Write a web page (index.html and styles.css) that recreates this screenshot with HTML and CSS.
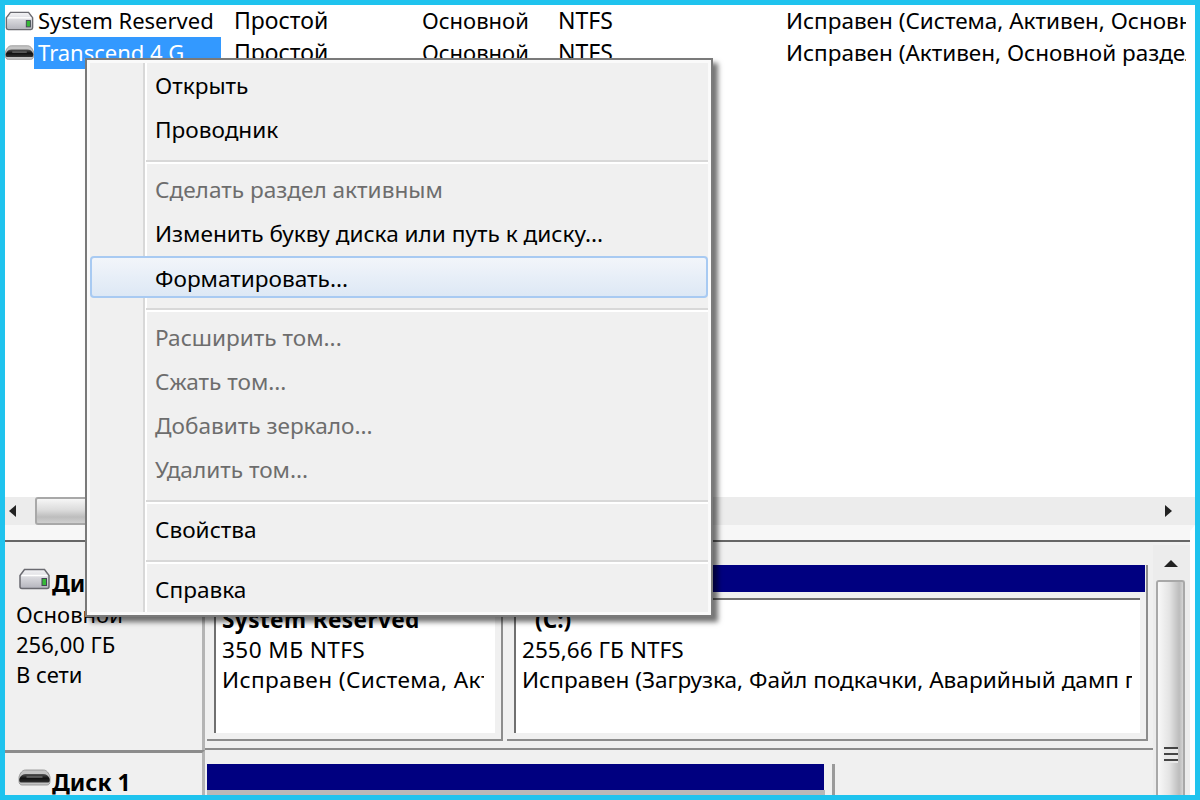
FILE: index.html
```html
<!DOCTYPE html>
<html lang="ru">
<head>
<meta charset="utf-8">
<title>Управление дисками</title>
<link rel="stylesheet" href="styles.css">
</head>
<body>
<svg class="defs" width="0" height="0" aria-hidden="true">
  <defs>
    <linearGradient id="g-body" x1="0" y1="0" x2="0" y2="1"><stop offset="0" stop-color="#f4f4f6"/><stop offset="1" stop-color="#b4b4bc"/></linearGradient>
    <linearGradient id="g-slot" x1="0" y1="0" x2="0" y2="1"><stop offset="0" stop-color="#555"/><stop offset=".5" stop-color="#111"/><stop offset="1" stop-color="#333"/></linearGradient>
    <symbol id="drive" viewBox="0 0 32 22">
      <path d="M6 1.500h20l4.500 6v11a2 2 0 0 1-2 2h-25a2 2 0 0 1-2-2v-11z" fill="url(#g-body)" stroke="#6a6a70" stroke-width="1.500"/>
      <path d="M3 7.500h26" stroke="#ffffff" stroke-width="1.500"/>
      <rect x="23.500" y="10.500" width="4.500" height="7" fill="#35b836" stroke="#445" stroke-width="1"/>
    </symbol>
    <symbol id="usb" viewBox="0 0 32 18">
      <path d="M7 1h18c3 0 5.500 3 6.500 7v4c0 2.500-1 4-3 4H3.500c-2 0-3-1.500-3-4V8C1.500 4 4 1 7 1z" fill="#c4c4c4" stroke="#8a8a8a" stroke-width=".8"/>
      <path d="M.800 10c1.200-3.500 3.500-5 6.500-5h17.400c3 0 5.300 1.500 6.500 5v1.500c0 1.500-1 2-2 2H2.800c-1 0-2-.5-2-2z" fill="url(#g-slot)"/>
      <path d="M8 8h16" stroke="#8a8a8a" stroke-width="1"/>
    </symbol>
  </defs>
</svg>
<div class="frame">
  <section class="list">
    <div class="row">
      <svg class="row-icon"><use href="#drive"/></svg>
      <span class="c-name">System Reserved</span>
      <span class="c-layout">Простой</span>
      <span class="c-type">Основной</span>
      <span class="c-fs">NTFS</span>
      <span class="c-status">Исправен (Система, Активен, Основной раздел)</span>
    </div>
    <div class="row">
      <svg class="row-icon"><use href="#usb"/></svg>
      <span class="c-name is-selected">Transcend 4 G</span>
      <span class="c-layout">Простой</span>
      <span class="c-type">Основной</span>
      <span class="c-fs">NTFS</span>
      <span class="c-status">Исправен (Активен, Основной раздел)</span>
    </div>
  </section>

  <div class="hscroll">
    <svg class="arrow" viewBox="0 0 10 14"><path d="M8 1v12L1 7z" fill="#222"/></svg>
    <div class="hthumb"></div>
    <svg class="arrow arrow-right" viewBox="0 0 10 14"><path d="M2 1v12l7-6z" fill="#222"/></svg>
  </div>
  <div class="splitter"></div>

  <section class="lower">
    <div class="disks">
      <div class="disk disk-first">
        <div class="disk-info">
          <div class="disk-title"><svg class="disk-icon"><use href="#drive"/></svg><b>Диск 0</b></div>
          <div>Основной</div>
          <div>256,00 ГБ</div>
          <div>В сети</div>
        </div>
        <div class="volumes">
          <div class="volume volume-sr">
            <div class="vol-head"></div>
            <div class="vol-body">
              <b class="vol-line">System Reserved</b>
              <div class="vol-line">350 МБ NTFS</div>
              <div class="vol-line">Исправен (Система, Активен, Основной раздел)</div>
            </div>
          </div>
          <div class="volume volume-c">
            <div class="vol-head"></div>
            <div class="vol-body">
              <b class="vol-line vol-letter">(C:)</b>
              <div class="vol-line">255,66 ГБ NTFS</div>
              <div class="vol-line">Исправен (Загрузка, Файл подкачки, Аварийный дамп памяти, Основной раздел)</div>
            </div>
          </div>
        </div>
      </div>
      <div class="disk disk-second">
        <div class="disk-info">
          <div class="disk-title"><svg class="disk-icon disk-icon-usb"><use href="#usb"/></svg><b>Диск 1</b></div>
        </div>
        <div class="volumes">
          <div class="volume volume-usb">
            <div class="vol-head"></div>
          </div>
        </div>
      </div>
    </div>
    <div class="vscroll">
      <svg class="v-arrow" viewBox="0 0 16 10"><path d="M8 1l7 7H1z" fill="#222"/></svg>
      <div class="vthumb">
        <span class="grip"></span>
      </div>
    </div>
  </section>
</div>

<nav class="menu">
  <div class="menu-item">Открыть</div>
  <div class="menu-item">Проводник</div>
  <div class="menu-sep"></div>
  <div class="menu-item is-disabled">Сделать раздел активным</div>
  <div class="menu-item">Изменить букву диска или путь к диску...</div>
  <div class="menu-item is-hover">Форматировать...</div>
  <div class="menu-sep"></div>
  <div class="menu-item is-disabled">Расширить том...</div>
  <div class="menu-item is-disabled">Сжать том...</div>
  <div class="menu-item is-disabled">Добавить зеркало...</div>
  <div class="menu-item is-disabled">Удалить том...</div>
  <div class="menu-sep"></div>
  <div class="menu-item">Свойства</div>
  <div class="menu-sep"></div>
  <div class="menu-item">Справка</div>
</nav>
</body>
</html>
```

FILE: styles.css
```css
* { box-sizing: border-box; }
html, body { margin: 0; padding: 0; }
body {
  width: 1200px;
  height: 800px;
  overflow: hidden;
  position: relative;
  font-family: "Noto Sans", "Open Sans", sans-serif;
  font-size: 22px;
  color: #000;
}
.defs { position: absolute; }

.frame {
  width: 1200px;
  height: 800px;
  border: 5px solid #1fc3ee;
  background: #fff;
  display: flex;
  flex-direction: column;
  overflow: hidden;
}

/* top volume list */
.list { height: 492px; background: #fff; padding-right: 9px; overflow: hidden; }
.row {
  height: 32px;
  display: flex;
  align-items: center;
  white-space: nowrap;
  overflow: hidden;
}
.row-icon { width: 29px; height: 20px; flex: none; }
.row > span { flex: none; line-height: 31px; height: 32px; }
.c-name { width: 187px; padding-left: 4px; }
.is-selected { background: #3399ff; color: #fff; height: 33px; margin-top: -1px; }
.c-layout { width: 188px; margin-left: 13px; font-size: 23px; }
.c-type { width: 136px; }
.c-fs { width: 228px; font-size: 23px; }
.c-status { width: 400px; overflow: hidden; font-size: 22.5px; }

/* horizontal scrollbar */
.hscroll {
  height: 28px;
  background: #ececec;
  display: flex;
  align-items: center;
  padding: 0 22px 0 3px;
}
.arrow { width: 10px; height: 14px; flex: none; }
.arrow-right { margin-left: auto; }
.hthumb {
  width: 300px;
  height: 28px;
  margin-left: 17px;
  border: 2px solid #a8a8a8;
  border-radius: 3px;
  background: linear-gradient(#f6f6f6, #dcdcdc 45%, #bdbdbd 75%, #cfcfcf);
}
.splitter {
  height: 20px;
  background: #f0f0f0;
  border-top: 6px solid #f7f7f7;
  box-shadow: inset 0 9px 0 #f7f7f7, inset 0 11px 0 #666;
  border-right: 5px solid #fff;
}

/* lower disks pane */
.lower { height: 250px; display: flex; background: #f0f0f0; }
.disks { flex: 1; min-width: 0; }
.disk { display: flex; }
.disk-first { height: 205px; }
.disk-second { height: 45px; }
.disk-info {
  width: 200px;
  flex: none;
  padding: 25px 0 0 11px;
  border-right: 3px solid #b4b4b4;
  line-height: 30px;
}
.disk-title { display: flex; align-items: center; height: 26px; margin-bottom: 3px; font-size: 23px; }
.disk-second .disk-info { padding-top: 16px; border-top: 3px solid #8c8c8c; }
.disk-icon { width: 33px; height: 22px; margin: -8px 1px 0 2px; flex: none; }
.disk-icon-usb { height: 18px; }

.volumes { flex: 1; min-width: 0; display: flex; padding: 20px 5px 7px 2px; border-bottom: 2px solid #8c8c8c; }
.disk-second .volumes { padding: 14px 0 0 2px; border-bottom: 0; }
.volume {
  border-right: 2px solid #8c8c8c;
  border-bottom: 2px solid #8c8c8c;
  background: #f0f0f0;
  display: flex;
  flex-direction: column;
  min-width: 0;
}
.volume-sr { width: 296px; letter-spacing: .4px; }
.volume-c { flex: 1; margin-left: 4px; }
.volume-usb {
  width: 628px;
  border-bottom: 0;
  border-right: 3px solid #9a9a9a;
  padding-right: 8px;
  background: linear-gradient(#b8b8b8, #b8b8b8) 0 26px / 618px 100% no-repeat #f0f0f0;
}
.vol-head { height: 27px; background: #000080; flex: none; margin-right: 1px; }
.volume-usb .vol-head { height: 26px; margin-right: 0; }
.vol-body {
  flex: 1;
  margin: 6px 6px 6px 7px;
  background: #fff;
  border-top: 2px solid #707070;
  border-left: 2px solid #707070;
  padding: 5px 8px 0 6px;
  line-height: 30px;
  white-space: nowrap;
  overflow: hidden;
  font-size: 22.6px;
}
.volume-sr .vol-body { padding-right: 11px; }
.vol-line { display: block; height: 30px; overflow: hidden; }
.vol-letter { padding-left: 13px; }

/* vertical scrollbar */
.vscroll {
  width: 42px;
  flex: none;
  background: #ececec;
  border-right: 5px solid #fff;
  padding: 14px 4px 0 2px;
  display: flex;
  flex-direction: column;
  align-items: center;
}
.v-arrow { width: 16px; height: 10px; flex: none; }
.vthumb {
  width: 29px;
  flex: 1;
  margin-top: 11px;
  border: 2px solid #a8a8a8;
  border-bottom: 0;
  border-radius: 3px 3px 0 0;
  background: linear-gradient(90deg, #f8f8f8, #e4e4e4 45%, #bcbcbc 85%, #d4d4d4);
  padding-top: 165px;
  display: flex;
  justify-content: center;
}
.grip {
  display: block;
  width: 14px;
  height: 16px;
  background: repeating-linear-gradient(#444 0 2px, #e8e8e8 2px 6px);
}

/* context menu */
.menu {
  position: absolute;
  left: 85px;
  top: 58px;
  width: 628px;
  height: 559px;
  background: #f0f0f0;
  border: 2px solid #7a7a7a;
  padding: 3px 3px 3px;
  box-shadow: inset 0 0 0 3px #fafafa, 5px 5px 5px rgba(0, 0, 0, .55);
  background-image: linear-gradient(90deg, transparent 56px, #d8d8d8 56px, #d8d8d8 58px, #fff 58px, #fff 60px, transparent 60px);
  font-size: 22.6px;
}
.menu-item {
  height: 44px;
  line-height: 46px;
  padding-left: 65px;
  white-space: nowrap;
}
.is-disabled { color: #6d6d6d; }
.is-hover {
  height: 42px;
  line-height: 42px;
  margin: 1px 0;
  border: 2px solid #a8caf2;
  border-radius: 4px;
  padding-left: 63px;
  background: linear-gradient(#f2f5fa, #dde8f5);
}
.menu-sep {
  height: 16px;
  margin-left: 56px;
  background: linear-gradient(#d8d8d8, #d8d8d8) 0 9px / 100% 2px no-repeat, linear-gradient(#fff, #fff) 0 11px / 100% 2px no-repeat;
}
```
